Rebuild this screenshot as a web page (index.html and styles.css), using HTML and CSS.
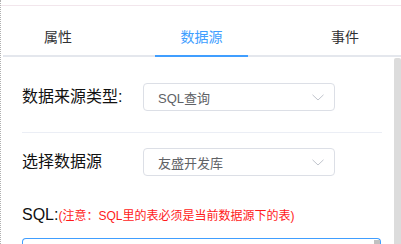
FILE: index.html
```html
<!DOCTYPE html>
<html lang="zh">
<head>
<meta charset="utf-8">
<link rel="stylesheet" href="styles.css">
</head>
<body>
<div class="frame">
  <div class="panel">
    <div class="tabs">
      <div class="tab tab-side">属性</div>
      <div class="tab tab-mid active">数据源<span class="bar"></span></div>
      <div class="tab tab-side">事件</div>
    </div>
    <div class="body-row">
      <div class="content">
        <div class="row row-first">
          <div class="label">数据来源类型:</div>
          <div class="select">
            <span class="value">SQL查询</span>
            <svg class="chev" width="12" height="7" viewBox="0 0 12 7"><path d="M0.5 0.8 L6 6 L11.5 0.8" fill="none" stroke="#c0c4cc" stroke-width="1"/></svg>
          </div>
        </div>
        <div class="divider"></div>
        <div class="row row-second">
          <div class="label">选择数据源</div>
          <div class="select">
            <span class="value">友盛开发库</span>
            <svg class="chev" width="12" height="7" viewBox="0 0 12 7"><path d="M0.5 0.8 L6 6 L11.5 0.8" fill="none" stroke="#c0c4cc" stroke-width="1"/></svg>
          </div>
        </div>
        <div class="sql-line"><span class="sql-label">SQL:</span><span class="note">(注意：SQL里的表必须是当前数据源下的表)</span></div>
        <div class="textarea"><span class="ta-thumb"></span></div>
      </div>
      <div class="scrollbar"></div>
    </div>
  </div>
</div>
</body>
</html>
```
FILE: styles.css
```css
html, body {
  margin: 0;
  padding: 0;
  background: #fff;
}
body {
  width: 401px;
  height: 244px;
  overflow: hidden;
  font-family: "Liberation Sans", "Noto Sans CJK SC", sans-serif;
}
.frame {
  height: 244px;
  overflow: hidden;
  border-left: 1px dotted #b0b0b0;
  box-sizing: border-box;
  padding-top: 5px;
}
.panel {
  border-top: 1px solid #f2e6ec;
}
.tabs {
  display: flex;
  margin-left: 2px;
  height: 49px;
  border-bottom: 2px solid #e4e7ed;
}
.tab {
  position: relative;
  box-sizing: border-box;
  height: 49px;
  padding-top: 21px;
  line-height: 20px;
  font-size: 14px;
  color: #303133;
  text-align: center;
}
.tab-side { width: 110px; }
.tab-mid { width: 177px; }
.tab.active { color: #409eff; }
.bar {
  position: absolute;
  left: 42px;
  width: 93px;
  bottom: -2px;
  height: 2px;
  background: #409eff;
}
.body-row {
  display: flex;
}
.content {
  flex: 1;
  padding: 0 12px 0 21px;
}
.scrollbar {
  width: 7px;
  margin-top: 1px;
  height: 186px;
  background: #dcdcdc;
  border-radius: 2px 2px 0 0;
}
.row {
  display: flex;
  align-items: center;
  height: 28px;
}
.row-first { margin-top: 26px; }
.row-second { margin-top: 15px; }
.label {
  width: 121px;
  font-size: 16px;
  color: #111;
  line-height: 22px;
}
.select {
  box-sizing: border-box;
  width: 192px;
  height: 28px;
  border: 1px solid #dcdfe6;
  border-radius: 4px;
  padding: 0 10px 0 14px;
  display: flex;
  align-items: center;
  justify-content: space-between;
}
.value {
  font-size: 13px;
  color: #606266;
}
.chev { display: block; }
.divider {
  margin-top: 21px;
  height: 1px;
  background: #ebeef5;
}
.sql-line {
  margin-top: 28px;
  line-height: 22px;
  height: 22px;
}
.sql-label {
  font-size: 16px;
  color: #111;
}
.note {
  font-size: 12px;
  color: #ff1a1a;
}
.textarea {
  position: relative;
  margin-top: 12px;
  width: 359px;
  height: 6px;
  box-sizing: border-box;
  border: 1px solid #409eff;
  border-bottom: 0;
  border-radius: 4px 4px 0 0;
}
.ta-thumb {
  position: absolute;
  right: 0;
  top: 1px;
  width: 6px;
  height: 5px;
  background: #c1c1c1;
}
```
